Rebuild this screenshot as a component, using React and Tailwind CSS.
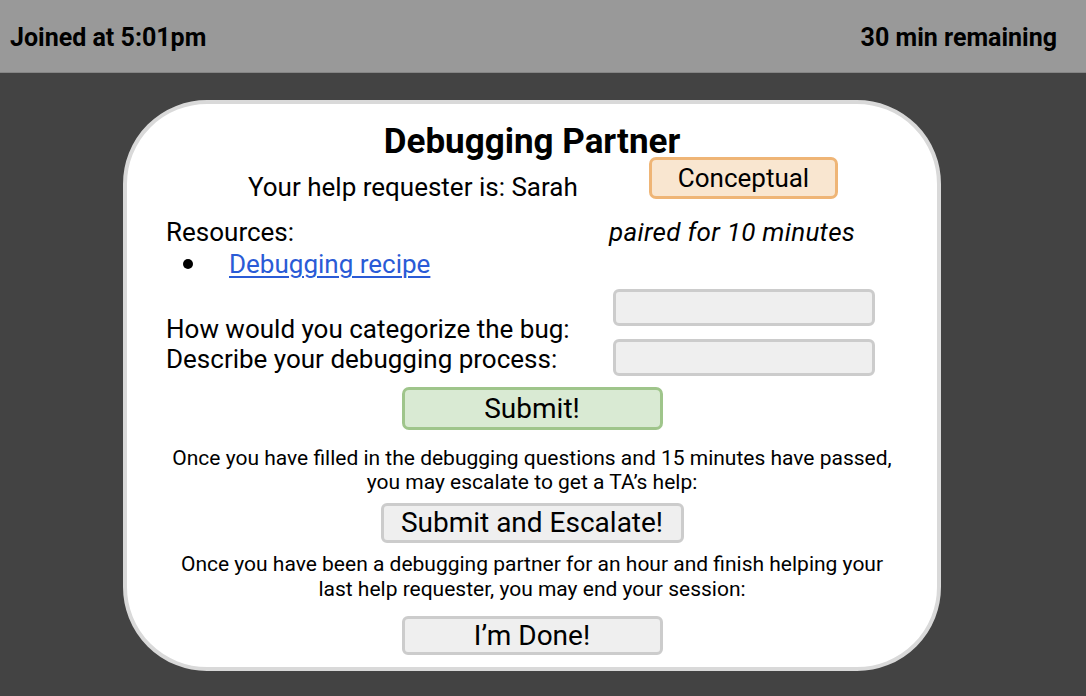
export default function App() {
  return (
    <div
      className="w-[1086px] h-[696px] bg-[#434343] overflow-hidden text-black"
      style={{ fontFamily: "Roboto, 'Liberation Sans', sans-serif" }}
    >
      <div className="h-[73px] bg-[#999999] border-b border-[#858585] flex items-center justify-between pl-[10px] pr-[29px] pt-[2px]">
        <span className="text-[25px] font-bold leading-none">Joined at 5:01pm</span>
        <span className="text-[25px] font-bold leading-none">30 min remaining</span>
      </div>

      <div className="ml-[123px] mt-[27px] w-[818px] h-[571px] bg-white border-[4px] border-[#d9d9d9] rounded-[84px] flex flex-col">
        <h1 className="mt-[23px] text-center text-[35px] font-bold leading-[30px]">Debugging Partner</h1>

        <div className="flex items-start">
          <div className="ml-[121px] mt-[15px] w-[401px] text-[26px] leading-[30px]">
            Your help requester is: Sarah
          </div>
          <div className="w-[189px] h-[42px] rounded-[7px] border-[3px] border-[#efb576] bg-[#f9e6d0] flex items-center justify-center text-[26px] leading-none">
            Conceptual
          </div>
        </div>

        <div className="mt-[15px] flex text-[26px] leading-[30px]">
          <div className="ml-[39px] w-[443px]">Resources:</div>
          <div className="italic tracking-[0.3px]">paired for 10 minutes</div>
        </div>

        <div className="mt-[2px] flex items-center text-[26px] leading-[30px]">
          <span className="ml-[56px] w-[10px] h-[10px] rounded-full bg-black" />
          <a href="#" className="ml-[36px] text-[#2a5bd6] underline underline-offset-[3px] decoration-[2px]">
            Debugging recipe
          </a>
        </div>

        <div className="mt-[10px] flex">
          <div className="ml-[39px] w-[447px] pt-[25px] text-[26px] leading-[30px]">
            <div>How would you categorize the bug:</div>
            <div>Describe your debugging process:</div>
          </div>
          <div className="flex flex-col gap-[13px]">
            <div className="w-[262px] h-[37px] rounded-[6px] border-[3px] border-[#cccccc] bg-[#efefef]" />
            <div className="w-[262px] h-[37px] rounded-[6px] border-[3px] border-[#cccccc] bg-[#efefef]" />
          </div>
        </div>

        <div className="mt-[11px] flex justify-center">
          <button className="w-[261px] h-[43px] rounded-[7px] border-[3px] border-[#9fc58b] bg-[#d9ead3] text-[28px] leading-none flex items-center justify-center">
            Submit!
          </button>
        </div>

        <p className="mt-[16px] text-center text-[21px] leading-[24px]">
          Once you have filled in the debugging questions and 15 minutes have passed,
          <br />
          you may escalate to get a TA’s help:
        </p>

        <div className="mt-[9px] flex justify-center">
          <button className="w-[303px] h-[40px] rounded-[6px] border-[3px] border-[#cccccc] bg-[#efefef] text-[28px] leading-none flex items-center justify-center">
            Submit and Escalate!
          </button>
        </div>

        <p className="mt-[9px] text-center text-[21px] leading-[25px]">
          Once you have been a debugging partner for an hour and finish helping your
          <br />
          last help requester, you may end your session:
        </p>

        <div className="mt-[14px] flex justify-center">
          <button className="w-[261px] h-[39px] rounded-[6px] border-[3px] border-[#cccccc] bg-[#efefef] text-[28px] leading-none flex items-center justify-center">
            I’m Done!
          </button>
        </div>
      </div>
    </div>
  );
}
